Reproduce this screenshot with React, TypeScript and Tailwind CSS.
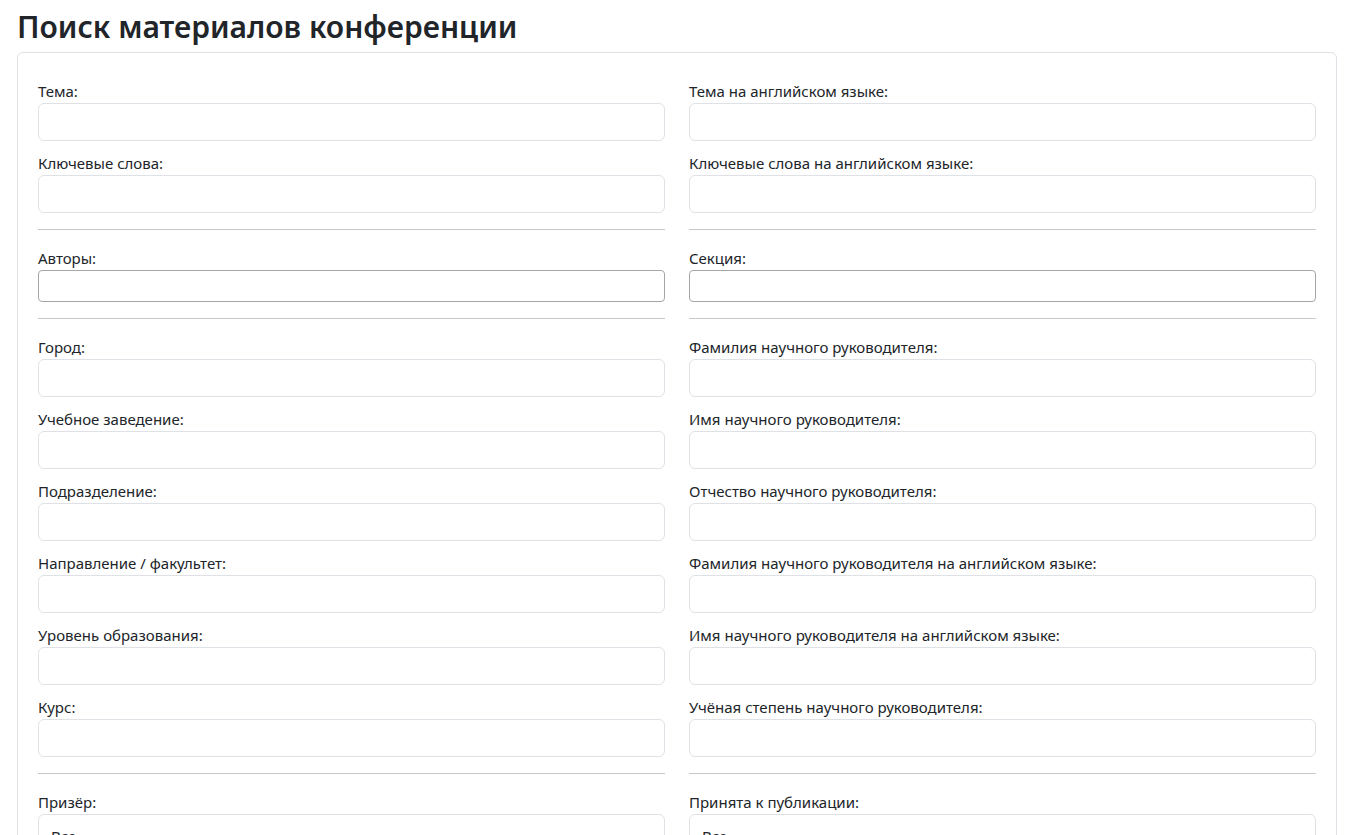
import React from "react";

type Field = { label: string; kind?: "text" | "tag" | "select" };

const rows: (Field[] | "hr")[] = [
  [{ label: "Тема:" }, { label: "Тема на английском языке:" }],
  [{ label: "Ключевые слова:" }, { label: "Ключевые слова на английском языке:" }],
  "hr",
  [
    { label: "Авторы:", kind: "tag" },
    { label: "Секция:", kind: "tag" },
  ],
  "hr",
  [{ label: "Город:" }, { label: "Фамилия научного руководителя:" }],
  [{ label: "Учебное заведение:" }, { label: "Имя научного руководителя:" }],
  [{ label: "Подразделение:" }, { label: "Отчество научного руководителя:" }],
  [
    { label: "Направление / факультет:" },
    { label: "Фамилия научного руководителя на английском языке:" },
  ],
  [
    { label: "Уровень образования:" },
    { label: "Имя научного руководителя на английском языке:" },
  ],
  [{ label: "Курс:" }, { label: "Учёная степень научного руководителя:" }],
  "hr",
  [
    { label: "Призёр:", kind: "select" },
    { label: "Принята к публикации:", kind: "select" },
  ],
];

function FieldBox({ field }: { field: Field }) {
  return (
    <div className="mb-[14px]">
      <label className="block text-[15px] leading-[17px] mb-[3px] text-[#212529]">{field.label}</label>
      {field.kind === "tag" ? (
        <input
          type="text"
          className="block w-full h-[32px] border border-[#a6a6a6] rounded-[4px] bg-white outline-none"
        />
      ) : field.kind === "select" ? (
        <select className="block w-full h-[38px] border border-[#dee2e6] rounded-md bg-white px-3 pt-[6px] text-[15px] text-[#212529] appearance-none outline-none">
          <option>Все</option>
        </select>
      ) : (
        <input
          type="text"
          className="block w-full h-[38px] border border-[#dee2e6] rounded-md bg-white outline-none"
        />
      )}
    </div>
  );
}

export default function App() {
  return (
    <div
      className="min-h-screen bg-white text-[#212529]"
      style={{ fontFamily: '"Noto Sans", "Open Sans", sans-serif' }}
    >
      <div className="w-[1320px] ml-[17px]">
        <h1 className="pt-[8px] pb-[6px] text-[30px] leading-[38px] font-semibold text-[#212529]">
          Поиск материалов конференции
        </h1>
        <div className="border border-[#dee2e6] rounded-md px-5 pt-[30px]">
          <div className="grid grid-cols-2 gap-x-[24px]">
            {rows.map((row, i) =>
              row === "hr" ? (
                <React.Fragment key={i}>
                  <hr className="border-0 border-t border-[#c8c8c8] mt-[2px] mb-[20px]" />
                  <hr className="border-0 border-t border-[#c8c8c8] mt-[2px] mb-[20px]" />
                </React.Fragment>
              ) : (
                <React.Fragment key={i}>
                  <FieldBox field={row[0]} />
                  <FieldBox field={row[1]} />
                </React.Fragment>
              )
            )}
          </div>
        </div>
      </div>
    </div>
  );
}
